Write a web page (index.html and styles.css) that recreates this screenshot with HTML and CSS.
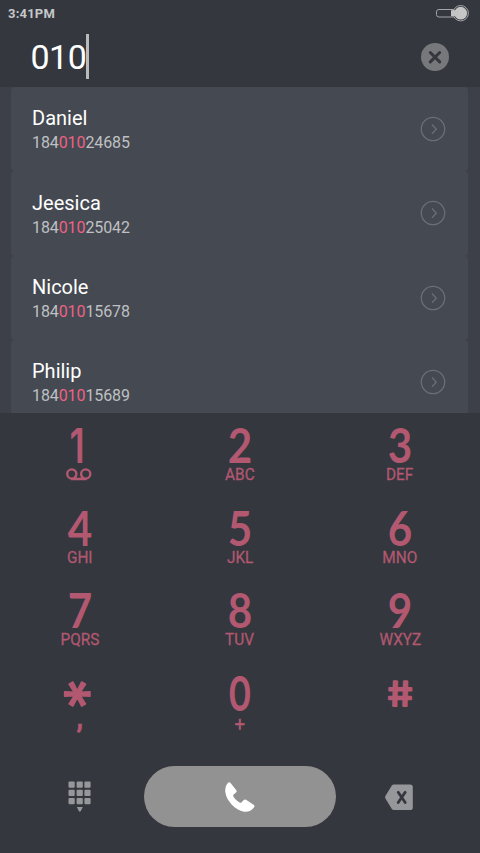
FILE: index.html
```html
<!DOCTYPE html>
<html lang="en">
<head>
<meta charset="utf-8">
<title>Dialer</title>
<link rel="stylesheet" href="styles.css">
</head>
<body>
<main class="phone">
  <header class="status">
    <span>3:41PM</span>
    <svg class="battery" width="36" height="20" viewBox="0 0 36 20"><rect x="2.500" y="5.500" width="20" height="7.500" rx="2.400" fill="none" stroke="#a4a5a8"/><circle cx="26.700" cy="9.200" r="7.700" fill="#34373e" stroke="#a4a5a8"/><circle cx="26.700" cy="9.200" r="6.400" fill="#c6c6c7"/><path d="M17 6.200h7v6h-7z" fill="#c3c3c4"/></svg>
  </header>
  <section class="entry">
    <span class="typed">010</span><span class="caret"></span>
    <svg class="clear" width="28" height="28" viewBox="0 0 28 28"><circle cx="14" cy="14" r="14" fill="#77787c"/><path d="M9.300 9.500l9.400 9.400m0-9.400l-9.400 9.400" stroke="#34373e" stroke-width="3" stroke-linecap="round"/></svg>
  </section>
  <section class="results">
    <article class="card"><div><h2>Daniel</h2><p>184<b>010</b>24685</p></div><svg class="more" viewBox="0 0 26 26"><circle cx="13" cy="13" r="11.700"/><path d="M12 8.500l4.300 4.700-4.300 4.600"/></svg></article>
    <article class="card"><div><h2>Jeesica</h2><p>184<b>010</b>25042</p></div><svg class="more" viewBox="0 0 26 26"><circle cx="13" cy="13" r="11.700"/><path d="M12 8.500l4.300 4.700-4.300 4.600"/></svg></article>
    <article class="card"><div><h2>Nicole</h2><p>184<b>010</b>15678</p></div><svg class="more" viewBox="0 0 26 26"><circle cx="13" cy="13" r="11.700"/><path d="M12 8.500l4.300 4.700-4.300 4.600"/></svg></article>
    <article class="card"><div><h2>Philip</h2><p>184<b>010</b>15689</p></div><svg class="more" viewBox="0 0 26 26"><circle cx="13" cy="13" r="11.700"/><path d="M12 8.500l4.300 4.700-4.300 4.600"/></svg></article>
  </section>
  <section class="keypad">
    <div class="key"><span class="digit plain one">1</span><svg class="voicemail" width="28" height="14" viewBox="0 0 28 14"><g fill="none" stroke="#b25870" stroke-width="2.400"><circle cx="6.800" cy="6" r="4.600"/><circle cx="20.700" cy="6" r="4.600"/><path d="M6 11h15.500M10.500 7.500v3M17 7.500v3"/></g></svg></div>
    <div class="key"><span class="digit">2</span><span class="letters">ABC</span></div>
    <div class="key"><span class="digit">3</span><span class="letters">DEF</span></div>
    <div class="key"><span class="digit">4</span><span class="letters">GHI</span></div>
    <div class="key"><span class="digit">5</span><span class="letters">JKL</span></div>
    <div class="key"><span class="digit">6</span><span class="letters">MNO</span></div>
    <div class="key"><span class="digit">7</span><span class="letters">PQRS</span></div>
    <div class="key"><span class="digit">8</span><span class="letters">TUV</span></div>
    <div class="key"><span class="digit">9</span><span class="letters">WXYZ</span></div>
    <div class="key"><svg class="symbol" width="40" height="38" viewBox="-20 -19 40 38"><text class="star" y="34.500" transform="translate(-.5 0) rotate(90)">*</text></svg><span class="letters comma">,</span></div>
    <div class="key"><span class="digit plain">0</span><span class="letters plus">+</span></div>
    <div class="key"><svg class="symbol" width="40" height="38" viewBox="-20 -19 40 38"><text class="hash" y="12.200" transform="scale(1.170 1) skewX(8)">#</text></svg></div>
  </section>
  <footer class="actions">
    <svg width="24" height="32" viewBox="0 0 24 32" fill="#96979a"><rect x="0.500" y="0.500" width="6.200" height="6.200" rx="1"/><rect x="8.600" y="0.500" width="6.200" height="6.200" rx="1"/><rect x="16.400" y="0.500" width="6.200" height="6.200" rx="1"/><rect x="0.500" y="8.800" width="6.200" height="6.200" rx="1"/><rect x="8.600" y="8.800" width="6.200" height="6.200" rx="1"/><rect x="16.400" y="8.800" width="6.200" height="6.200" rx="1"/><rect x="0.500" y="17" width="6.200" height="6.200" rx="1"/><rect x="8.600" y="17" width="6.200" height="6.200" rx="1"/><rect x="16.400" y="17" width="6.200" height="6.200" rx="1"/><path d="M8.800 26h6l-2 4q-1 1.500-2 0z"/></svg>
    <div class="call"><svg width="30" height="30" viewBox="0 0 30 30"><path d="M3.200.7C4 .1 5 .2 5.600 1l5.700 7.300c.6.800.4 1.500-.3 2.100l-2.300 2.100c-.6.600-.7 1.200-.3 2 1.200 2.400 3.500 4.600 6.200 6 .8.400 1.500.3 2-.3l2.200-2.200c.7-.7 1.400-.8 2.200-.2l7.600 4.900c1 .7 1.200 1.600.5 2.500-2.500 3.500-6 5-10.200 4.500C10.500 28.400 1.400 19 .3 10 0 6 1 2.700 3.200.7z" fill="#fff"/></svg></div>
    <svg class="erase" width="28" height="27" viewBox="0 0 28 27"><path d="M8.800.5h16.400q2.600 0 2.600 2.600v20.300q0 2.600-2.600 2.600H8.800q-1 0-1.800-.8L.7 15q-1.200-1.700 0-3.400L7 1.300q.7-.8 1.800-.8z" fill="#96979a"/><path d="M13.200 8.300l7 10.200m0-10.200l-7 10.200" stroke="#34373e" stroke-width="2.800" stroke-linecap="round"/></svg>
  </footer>
</main>
</body>
</html>
```
FILE: styles.css
```css
* { box-sizing: border-box; }
body { margin: 0; background: #34373e; font-family: Roboto, "Liberation Sans", sans-serif; }
.phone { width: 480px; height: 853px; overflow: hidden; display: flex; flex-direction: column; background: #34373e; }
.status { height: 27px; flex: none; display: flex; justify-content: space-between; align-items: center; padding: 0 10px 0 8px; color: #c6c7c9; font-size: 13px; font-weight: 700; letter-spacing: .2px; }
.entry { height: 60px; flex: none; display: flex; align-items: center; padding: 0 31px 0 30.500px; }
.typed { color: #fff; font-size: 34px; line-height: 60px; letter-spacing: -.5px; }
.caret { width: 2.500px; height: 45px; background: #b9babc; margin: 0 0 2px 0; }
.clear { margin-left: auto; }
.results { height: 326px; flex: none; overflow: hidden; padding: 0 12px 0 11px; background: #3d4048; }
.card { height: 84.400px; display: flex; justify-content: space-between; align-items: center; padding: 3.500px 22px 0 21px; border-radius: 4px; background: #454951; }
.card h2 { margin: 0; color: #fff; font-size: 20px; font-weight: 400; line-height: 25px; }
.card p { margin: 0; color: #bfc0c3; font-size: 16px; line-height: 24.500px; letter-spacing: -.1px; }
.card b { color: #ee6286; font-weight: 400; }
.more { width: 26px; height: 26px; fill: none; stroke: #6b6e75; stroke-width: 1.300; margin-bottom: 4px; }
.keypad { flex: none; display: grid; grid-template-columns: repeat(3, 160px); grid-auto-rows: 82.700px; height: 331px; padding-top: 14px; color: #b25870; }
.key { display: flex; flex-direction: column; align-items: center; }
.digit { height: 38px; line-height: 36px; font-family: Lato, Roboto, sans-serif; font-size: 48px; font-weight: 700; transform: scaleX(.88); }
.plain { line-height: 38px; font-family: Inter, Roboto, sans-serif; font-weight: 600; transform: scaleX(.75); }
.one { margin-right: 5px; }
.letters { margin-top: 1px; font-size: 16.500px; font-weight: 400; line-height: 17px; transform: scaleX(.93); -webkit-text-stroke: .3px #b25870; }
.voicemail { margin: 3px 2px 0 0; }
.symbol { flex: none; overflow: visible; fill: #b25870; stroke: #b25870; stroke-linejoin: round; font-family: Inter, sans-serif; font-weight: 400; text-anchor: middle; }
.star { font-size: 62px; stroke-width: 1.500px; }
.hash { font-size: 34px; stroke-width: 2px; }
.comma { font-size: 28px; font-weight: 900; line-height: 8px; }
.plus { font-size: 20px; line-height: 20px; }
.actions { flex: 1; display: grid; grid-template-columns: 160px 160px 160px; align-items: center; justify-items: center; padding-bottom: 4px; }
.call { width: 192px; height: 61px; border-radius: 31px; background: #929292; display: flex; align-items: center; justify-content: center; }
.erase { margin: 2px 2px 0 0; }
```
